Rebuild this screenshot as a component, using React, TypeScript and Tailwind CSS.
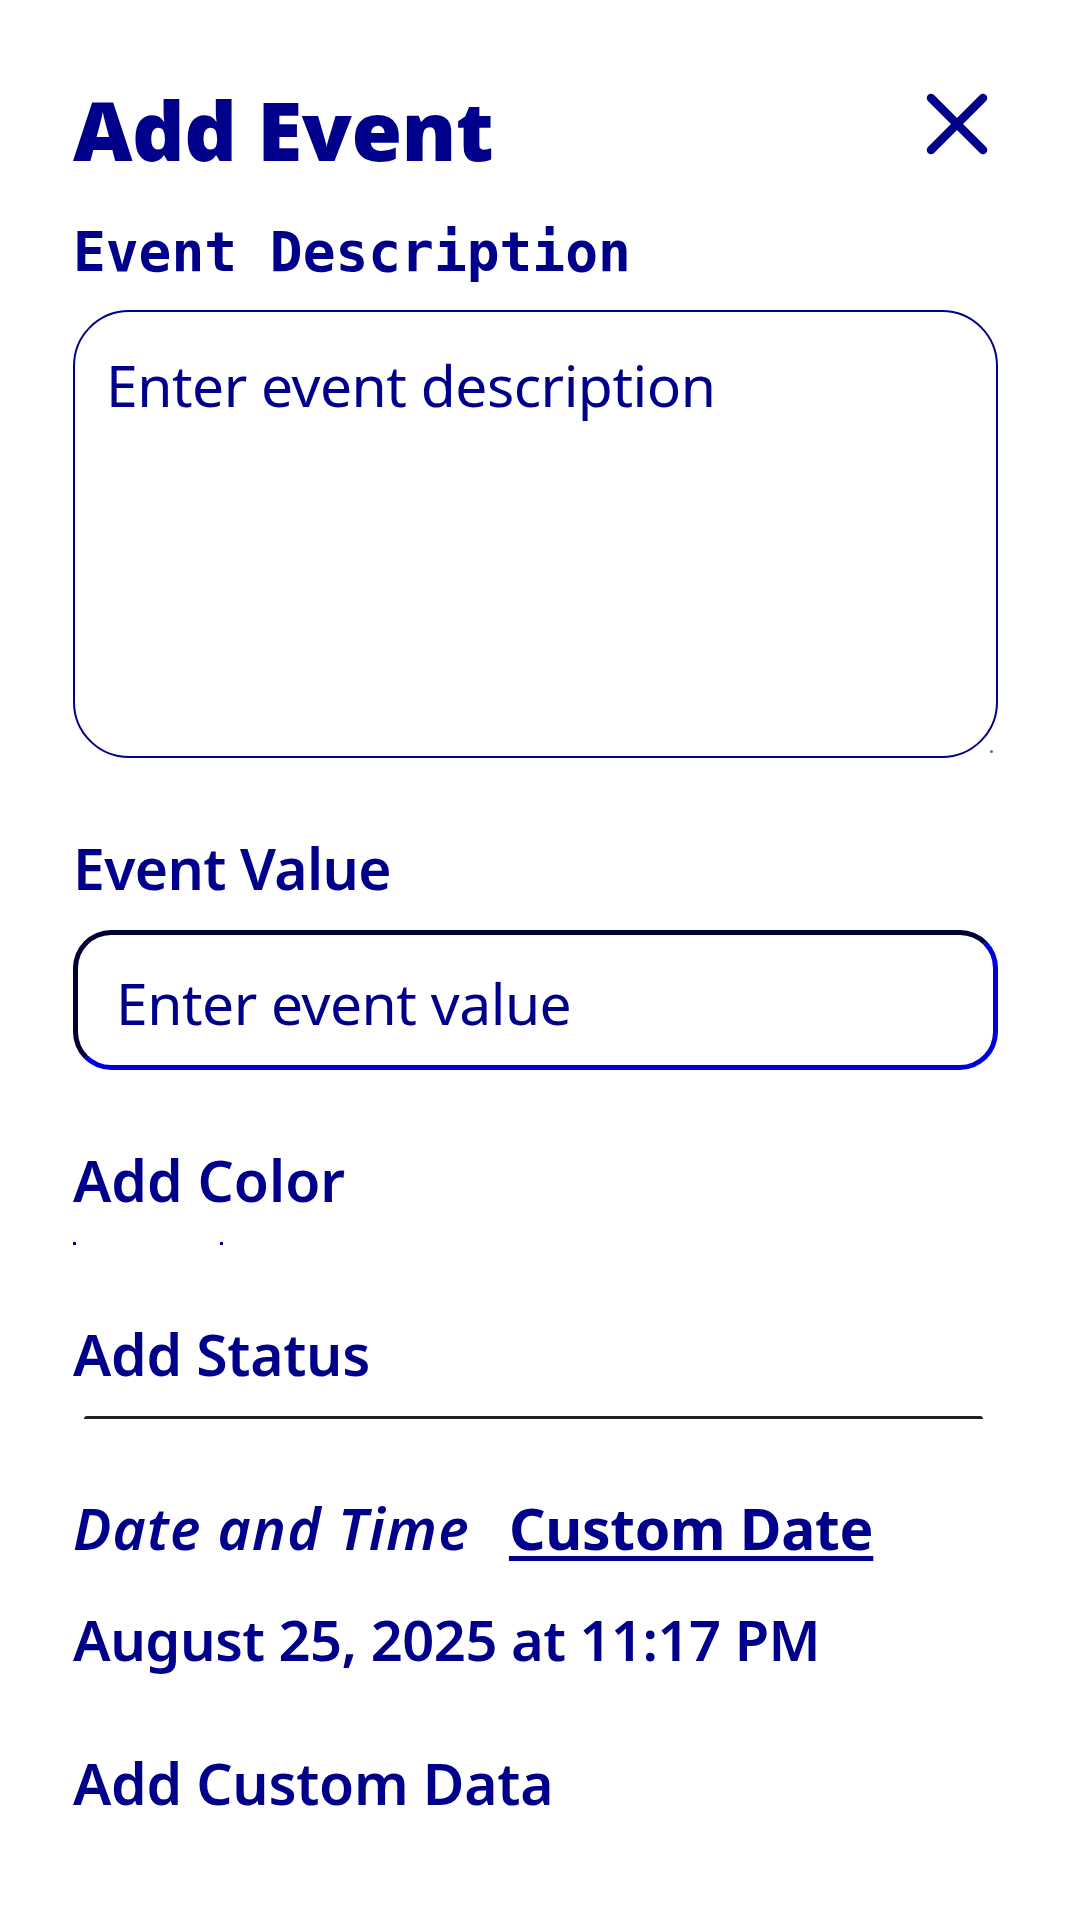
import { useState } from "react";

const AddEvent = () => {
  const [description, setDescription] = useState("");
  const [value, setValue] = useState("");

  return (
    <div className="min-h-[1920px] w-[1080px] bg-white pl-[73px] pr-[82px] pt-[87px] font-['Noto_Sans',sans-serif] text-[#00008b]">
      {/* header */}
      <div className="flex h-[84px] items-start justify-between">
        <h1 className="text-[82px] font-black leading-[84px] tracking-[-0.5px]">Add Event</h1>
        <button className="mr-[9px] mt-[5px] h-[64px] w-[64px]" aria-label="Close">
          <svg viewBox="0 0 64 64" className="h-[64px] w-[64px]">
            <path
              d="M6 6 L58 58 M58 6 L6 58"
              stroke="#00008b"
              strokeWidth="8.5"
              strokeLinecap="round"
              fill="none"
            />
          </svg>
        </button>
      </div>

      <label className="mt-[54px] block font-['DejaVu_Sans_Mono',monospace] text-[54.5px] font-bold leading-[54px]">
        Event Description
      </label>
      <div className="relative mt-[31px]">
        <textarea
          value={description}
          onChange={(e) => setDescription(e.target.value)}
          placeholder="Enter event description"
          className="block h-[448px] w-full resize-none rounded-[56px] border-2 border-[#00008b] pl-[31px] pr-[31px] pt-[30px] text-[57px] leading-[87px] tracking-[-0.5px] placeholder:text-[#00008b] focus:outline-none"
        />
        <span className="absolute bottom-[5px] right-[5px] h-[3px] w-[3px] rounded-full bg-[#6b6b6b]" />
      </div>

      <label className="mt-[82px] block text-[57px] font-semibold leading-[57px] tracking-[-0.6px]">
        Event Value
      </label>
      <input
        value={value}
        onChange={(e) => setValue(e.target.value)}
        placeholder="Enter event value"
        className="mt-[33px] block h-[140px] w-full rounded-[38px] border-[5px] border-b-[#0000dd] border-l-[#000036] border-r-[#0000dd] border-t-[#000036] pl-[38px] pt-[6px] text-[57px] tracking-[-0.5px] placeholder:text-[#00008b] focus:outline-none"
      />

      <div className="mt-[82px] text-[57px] font-semibold leading-[57px]">Add Color</div>
      <div className="mt-[33px] flex h-[3px] gap-[144px]">
        <span className="h-[3px] w-[3px] bg-[#00008b]" />
        <span className="h-[3px] w-[3px] bg-[#00008b]" />
      </div>

      <div className="mt-[81px] text-[57px] font-semibold leading-[57px] tracking-[-0.3px]">
        Add Status
      </div>
      <div className="ml-[11px] mr-[15px] mt-[33px] h-[3px] rounded-t-full bg-[#222222]" />

      <div className="mt-[81px] flex items-baseline gap-[39px] text-[57px] leading-[57px]">
        <span className="font-semibold italic tracking-[1.2px]">Date and Time</span>
        <button className="font-bold underline decoration-[5px] underline-offset-[6px] tracking-[-0.3px]">
          Custom Date
        </button>
      </div>
      <div className="mt-[54px] text-[56px] font-semibold leading-[57px] tracking-[-0.5px]">
        August 25, 2025 at 11:17 PM
      </div>

      <div className="mt-[87px] text-[57px] font-semibold leading-[57px] tracking-[-0.3px]">
        Add Custom Data
      </div>
    </div>
  );
};

export default function App() {
  return <AddEvent />;
}
